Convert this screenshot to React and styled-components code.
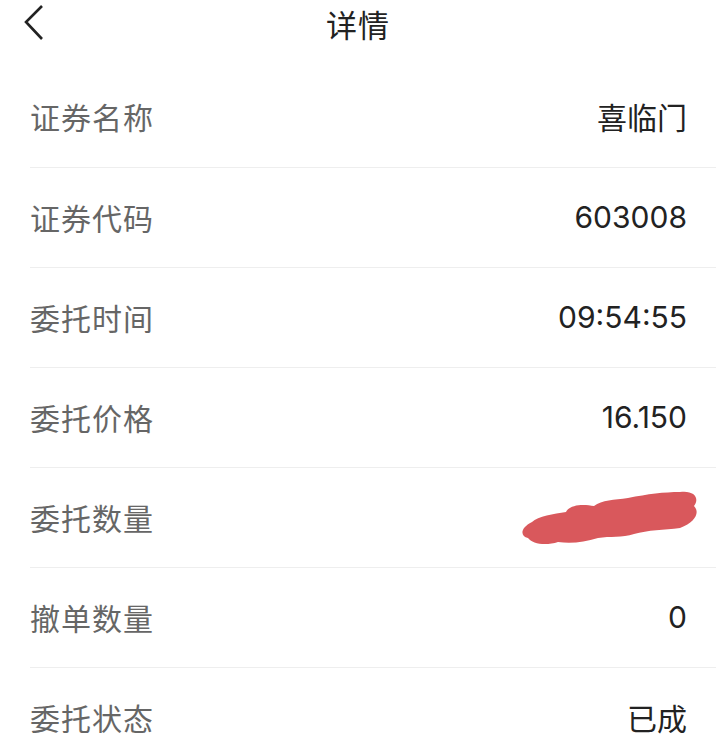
import styled, { createGlobalStyle } from "styled-components";

const GlobalStyle = createGlobalStyle`
  html, body {
    margin: 0;
    padding: 0;
    background: #ffffff;
    font-family: "Noto Sans CJK SC", "Noto Sans", sans-serif;
    overflow: hidden;
  }
`;

const rows = [
  { label: "证券名称", value: "喜临门" },
  { label: "证券代码", value: "603008" },
  { label: "委托时间", value: "09:54:55" },
  { label: "委托价格", value: "16.150" },
  { label: "委托数量", value: null },
  { label: "撤单数量", value: "0" },
  { label: "委托状态", value: "已成" },
];

const BackIcon = () => (
  <svg width="24" height="38" viewBox="0 0 24 38" fill="none">
    <path d="M20 2 L4 18 L20 35" stroke="#222" strokeWidth="2.6" />
  </svg>
);

const Scribble = () => (
  <svg width="180" height="64" viewBox="0 0 180 64">
    <path
      d="M14 36 C20 30 36 28 48 26 C52 18 66 18 76 20 C84 14 96 14 110 12
         C130 8 146 6 162 6 C176 4 182 12 176 20 C182 26 178 36 162 42
         C146 44 130 44 116 48 C104 52 92 50 80 52 C66 56 54 58 40 56
         C28 60 14 58 10 52 C2 50 2 42 14 36 Z"
      fill="#d9585c"
    />
  </svg>
);

const App = () => (
  <Page>
    <GlobalStyle />
    <Header>
      <BackButton>
        <BackIcon />
      </BackButton>
      <Title>详情</Title>
    </Header>
    <List>
      {rows.map((row, i) => (
        <Row key={row.label} first={i === 0}>
          <Label>{row.label}</Label>
          {row.value !== null ? (
            <Value>{row.value}</Value>
          ) : (
            <Redacted>
              <Scribble />
            </Redacted>
          )}
        </Row>
      ))}
    </List>
  </Page>
);

const Page = styled.main`
  width: 716px;
  height: 744px;
  overflow: hidden;
  background: #ffffff;
`;

const Header = styled.header`
  height: 67px;
  padding-bottom: 20px;
  box-sizing: border-box;
  display: flex;
  align-items: center;
  justify-content: center;
  position: relative;
`;

const BackButton = styled.div`
  position: absolute;
  left: 22px;
  top: 4px;
  display: flex;
`;

const Title = styled.h1`
  margin: 0;
  font-size: 31px;
  font-weight: 400;
  color: #222222;
  letter-spacing: 1px;
`;

const List = styled.section`
  display: flex;
  flex-direction: column;
`;

const Row = styled.div`
  height: 100px;
  flex-shrink: 0;
  box-sizing: border-box;
  margin-left: 30px;
  padding-right: 29px;
  padding-bottom: 2px;
  display: flex;
  align-items: center;
  justify-content: space-between;
  border-top: ${({ first }) => (first ? "none" : "1.5px solid #eeeeee")};
`;

const Label = styled.span`
  font-size: 30px;
  color: #666666;
  letter-spacing: 1px;
`;

const Value = styled.span`
  font-family: "Inter", "Noto Sans CJK SC", sans-serif;
  font-size: 30px;
  color: #222222;
`;

const Redacted = styled.div`
  display: flex;
  margin-right: -11px;
  margin-top: 2px;
`;

export default App;
